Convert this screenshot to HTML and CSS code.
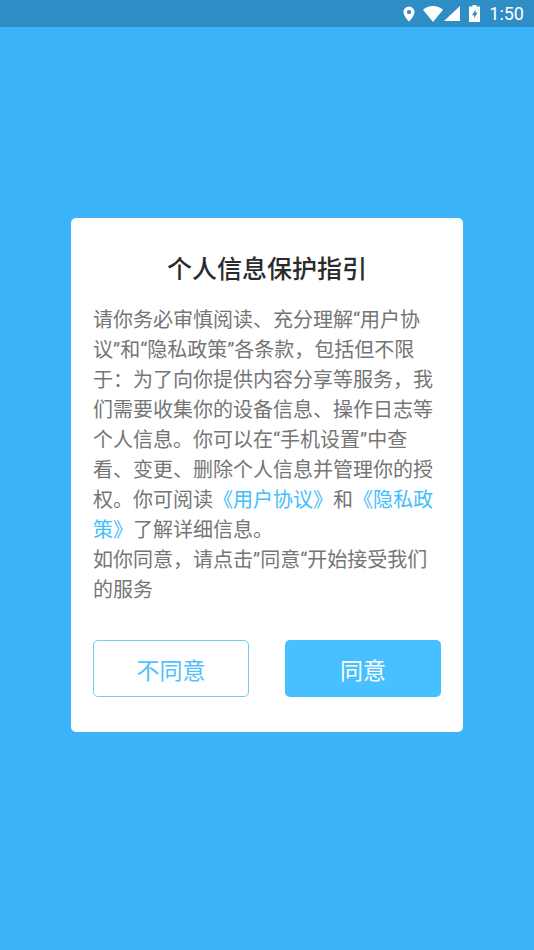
FILE: index.html
```html
<!DOCTYPE html>
<html lang="zh-CN">
<head>
  <meta charset="UTF-8" />
  <meta name="viewport" content="width=device-width, initial-scale=1.0" />
  <title>个人信息保护指引</title>
  <link rel="stylesheet" href="styles.css">
</head>
<body>
  <div class="status-bar">
    <svg class="icon-pin" viewBox="0 0 12 16" width="12" height="16"><path fill="#fff" fill-rule="evenodd" d="M6 .5A5.600 5.600 0 0 0 .4 6.100C.4 10 6 15.700 6 15.700s5.600-5.700 5.600-9.600A5.600 5.600 0 0 0 6 .5zm0 3.500a2.100 2.100 0 1 1 0 4.200 2.100 2.100 0 0 1 0-4.200z"/></svg>
    <svg class="icon-wifi" viewBox="0 0 20 16" width="20" height="16"><path fill="#fff" d="M0 3.800C2.700 1.400 6.200 0 10 0s7.300 1.400 10 3.800L10 16z"/></svg>
    <svg class="icon-signal" viewBox="0 0 16 15" width="16" height="15"><path fill="#fff" d="M16 0v15H0z"/></svg>
    <svg class="icon-battery" viewBox="0 0 11 17" width="11" height="17"><path fill="#fff" fill-rule="evenodd" d="M3.500 0h4v1.500H11V17H0V1.500h3.500zM6.800 4 3 10.200h2.200v3.300L8.500 7.600H6.300z"/></svg>
    <span class="clock">1:50</span>
  </div>

  <main class="screen">
    <section class="dialog">
      <h1>个人信息保护指引</h1>
      <p class="message">请你务必审慎阅读、充分理解“用户协<br>议”和“隐私政策”各条款，包括但不限<br>于：为了向你提供内容分享等服务，我<br>们需要收集你的设备信息、操作日志等<br>个人信息。你可以在“手机设置”中查<br>看、变更、删除个人信息并管理你的授<br>权。你可阅读<a href="#">《用户协议》</a>和<a href="#">《隐私政<br>策》</a>了解详细信息。<br>如你同意，请点击”同意“开始接受我们<br>的服务</p>
      <div class="actions">
        <button class="btn btn-outline">不同意</button>
        <button class="btn btn-solid">同意</button>
      </div>
    </section>
  </main>
</body>
</html>
```

FILE: styles.css
```css
* {
  box-sizing: border-box;
}

html, body {
  height: 100%;
}

body {
  margin: 0;
  display: flex;
  flex-direction: column;
  background-color: #3cb4fa;
  font-family: Roboto, "Noto Sans CJK SC", sans-serif;
}

.status-bar {
  height: 27px;
  flex: none;
  display: flex;
  align-items: center;
  justify-content: flex-end;
  padding-right: 10px;
  background-color: #2f8dc5;
  color: #fff;
}

.icon-pin {
  margin-right: 8px;
}

.icon-wifi {
  margin-right: 1px;
}

.icon-signal {
  margin-right: 9px;
}

.icon-battery {
  margin-right: 9px;
}

.clock {
  font-size: 18px;
}

.screen {
  flex: 1;
  padding: 191px 71px 0;
}

.dialog {
  height: 514px;
  padding: 0 22px;
  background: #fff;
  border-radius: 5px;
}

.dialog h1 {
  margin: 0;
  padding-top: 35px;
  font-size: 25px;
  line-height: 34px;
  font-weight: 500;
  color: #2b2b2b;
  text-align: center;
}

.message {
  margin: 0;
  padding-top: 18px;
  font-size: 20px;
  line-height: 30px;
  color: #757575;
  white-space: nowrap;
}

.message a {
  color: #45bdfb;
  text-decoration: none;
}

.actions {
  display: flex;
  justify-content: space-between;
  margin-top: 35px;
}

.btn {
  width: 156px;
  height: 57px;
  padding: 0;
  border-radius: 5px;
  font-family: inherit;
  font-size: 23px;
}

.btn-outline {
  background: #fff;
  border: 1px solid #6fcdfd;
  color: #52c0fb;
}

.btn-solid {
  background: #47c0ff;
  border: 0;
  color: #fff;
}
```
